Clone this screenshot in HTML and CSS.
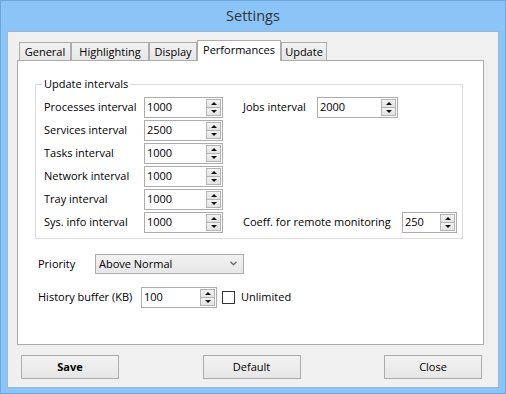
FILE: index.html
```html
<!DOCTYPE html>
<html>

<head>
    <title>Settings</title>
    <link rel="stylesheet" href="styles.css">
</head>

<body>
    <div class="window">
        <div class="titlebar">Settings</div>
        <div class="client">
            <div class="tabcontrol">
                <div class="tabs">
                    <div class="tab tab_general">General</div>
                    <div class="tab tab_highlight">Highlighting</div>
                    <div class="tab tab_display">Display</div>
                    <div class="tab tab_perf active">Performances</div>
                    <div class="tab tab_update">Update</div>
                </div>
                <div class="page">
                    <fieldset class="group">
                        <legend>Update intervals</legend>
                        <div class="intervals">
                            <div class="col_left">
                                <div class="row">
                                    <span class="label">Processes interval</span>
                                    <div class="spin"><span class="val">1000</span><div class="arrows"><span class="up"></span><span class="down"></span></div></div>
                                </div>
                                <div class="row">
                                    <span class="label">Services interval</span>
                                    <div class="spin"><span class="val">2500</span><div class="arrows"><span class="up"></span><span class="down"></span></div></div>
                                </div>
                                <div class="row">
                                    <span class="label">Tasks interval</span>
                                    <div class="spin"><span class="val">1000</span><div class="arrows"><span class="up"></span><span class="down"></span></div></div>
                                </div>
                                <div class="row">
                                    <span class="label">Network interval</span>
                                    <div class="spin"><span class="val">1000</span><div class="arrows"><span class="up"></span><span class="down"></span></div></div>
                                </div>
                                <div class="row">
                                    <span class="label">Tray interval</span>
                                    <div class="spin"><span class="val">1000</span><div class="arrows"><span class="up"></span><span class="down"></span></div></div>
                                </div>
                                <div class="row">
                                    <span class="label">Sys. info interval</span>
                                    <div class="spin"><span class="val">1000</span><div class="arrows"><span class="up"></span><span class="down"></span></div></div>
                                </div>
                            </div>
                            <div class="col_right">
                                <div class="row">
                                    <span class="label label_jobs">Jobs interval</span>
                                    <div class="spin spin_jobs"><span class="val">2000</span><div class="arrows"><span class="up"></span><span class="down"></span></div></div>
                                </div>
                                <div class="row">
                                    <span class="label label_coeff">Coeff. for remote monitoring</span>
                                    <div class="spin spin_coeff"><span class="val">250</span><div class="arrows"><span class="up"></span><span class="down"></span></div></div>
                                </div>
                            </div>
                        </div>
                    </fieldset>

                    <div class="row priority_row">
                        <span class="label label_priority">Priority</span>
                        <div class="combo">
                            <span>Above Normal</span>
                            <svg width="7" height="5" viewBox="0 0 7 5"><polyline points="0.5,0.8 3.5,3.8 6.5,0.8" fill="none" stroke="#6d6d6d" stroke-width="1.4" /></svg>
                        </div>
                    </div>

                    <div class="row history_row">
                        <span class="label label_history">History buffer (KB)</span>
                        <div class="spin spin_history"><span class="val">100</span><div class="arrows"><span class="up"></span><span class="down"></span></div></div>
                        <span class="check"></span>
                        <span class="check_text">Unlimited</span>
                    </div>
                </div>
            </div>
            <div class="buttons">
                <div class="btn btn_save">Save</div>
                <div class="btn">Default</div>
                <div class="btn">Close</div>
            </div>
        </div>
    </div>
</body>

</html>
```

FILE: styles.css
```css
* {
    box-sizing: border-box;
}

body {
    margin: 0;
    font-family: "Open Sans", "Noto Sans", sans-serif;
    font-size: 11px;
    color: #000;
}

.window {
    width: 506px;
    height: 394px;
    background-color: #8bc5f8;
    border: 1px solid #6ba7dd;
    display: flex;
    flex-direction: column;
}

.titlebar {
    height: 30px;
    line-height: 30px;
    flex-shrink: 0;
    text-align: center;
    font-size: 14.5px;
    color: #333;
}

.client {
    flex: 1;
    margin: 0 6px 5px;
    background-color: #f0f0f0;
    border: 1px solid #9db7d0;
    padding: 8px 14px 0 9px;
}

/* tabs */

.tabs {
    display: flex;
    align-items: flex-end;
    height: 20px;
    padding-left: 2px;
}

.tab {
    height: 18px;
    line-height: 18px;
    text-align: center;
    border: 1px solid #acacac;
    border-bottom: none;
    background: linear-gradient(#f2f2f2, #e6e6e6);
}

.tab.active {
    height: 21px;
    line-height: 18px;
    margin-bottom: -1px;
    background: #fff;
    position: relative;
    z-index: 1;
}

.tab_general { width: 52px; }
.tab_highlight { width: 78px; }
.tab_display { width: 48px; }
.tab_perf { width: 84px; }
.tab_update { width: 46px; }

.page {
    height: 285px;
    border: 1px solid #acacac;
    background-color: #fff;
}

/* group box */

.group {
    margin: 15px 20px 0 17px;
    padding: 5px 0 5px 8px;
    border: 1px solid #dcdcdc;
}

.group legend {
    padding: 0 2px;
    margin-left: -2px;
    line-height: 16px;
}

.intervals {
    display: flex;
    gap: 20px;
}

.col_left {
    display: flex;
    flex-direction: column;
    gap: 2px;
}

.col_right {
    display: flex;
    flex-direction: column;
    justify-content: space-between;
}

.row {
    display: flex;
    align-items: center;
    height: 21px;
}

.label {
    width: 100px;
    white-space: nowrap;
    padding-bottom: 2px;
}

.label_jobs { width: 74px; }
.label_coeff { width: 159px; }
.label_priority { width: 57px; }
.label_history { width: 103px; }

/* spin edit */

.spin {
    display: flex;
    width: 79px;
    height: 21px;
    padding: 1px;
    border: 1px solid #acacac;
    background-color: #fff;
}

.spin_jobs { width: 81px; }
.spin_coeff { width: 55px; }
.spin_history { width: 76px; }

.val {
    flex: 1;
    padding-left: 1px;
    line-height: 15px;
}

.arrows {
    width: 15px;
    display: flex;
    flex-direction: column;
}

.arrows span {
    flex: 1;
    display: flex;
    align-items: center;
    justify-content: center;
    border: 1px solid #b4b4b4;
    background: linear-gradient(#f3f3f3, #e3e3e3);
}

.arrows .down {
    border-top: none;
}

.up::after,
.down::after {
    content: "";
    border-left: 3px solid transparent;
    border-right: 3px solid transparent;
}

.up::after {
    border-bottom: 3px solid #111;
}

.down::after {
    border-top: 3px solid #111;
}

/* bottom rows */

.priority_row {
    margin: 15px 0 0 20px;
    height: 20px;
}

.combo {
    width: 149px;
    height: 20px;
    display: flex;
    align-items: center;
    justify-content: space-between;
    padding: 0 6px 1px 3px;
    border: 1px solid #acacac;
    background: linear-gradient(#f2f2f2, #e6e6e6);
}

.history_row {
    margin: 13px 0 0 20px;
}

.check {
    width: 13px;
    height: 13px;
    margin-left: 5px;
    border: 1px solid #333;
    background-color: #fff;
}

.check_text {
    margin-left: 6px;
    padding-bottom: 2px;
}

/* buttons */

.buttons {
    display: flex;
    justify-content: space-between;
    margin-top: 10px;
    padding: 0 2px 0 4px;
}

.btn {
    width: 98px;
    height: 24px;
    display: flex;
    align-items: center;
    justify-content: center;
    padding-bottom: 1px;
    border: 1px solid #acacac;
    background: linear-gradient(#f2f2f2, #e6e6e6);
}

.btn_save {
    font-weight: bold;
}
```
